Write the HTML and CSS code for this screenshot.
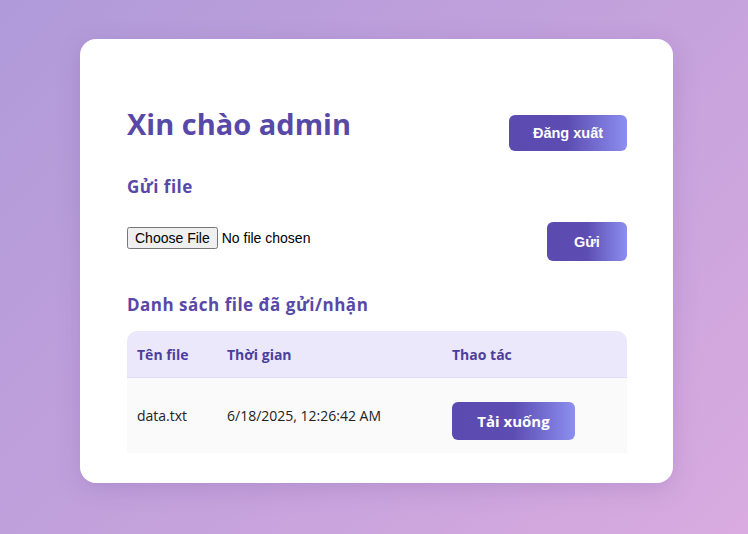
FILE: index.html
```html
<!DOCTYPE html>
<html lang="vi">
<head>
<meta charset="utf-8">
<title>Dashboard</title>
<link rel="stylesheet" href="styles.css">
</head>
<body>
<main class="card">
  <header class="top">
    <h1 class="title">Xin chào admin</h1>
    <button class="btn btn-logout">Đăng xuất</button>
  </header>
  <h3 class="section">Gửi file</h3>
  <form class="upload">
    <input class="file" type="file">
    <button type="button" class="btn btn-send">Gửi</button>
  </form>
  <h3 class="section section-list">Danh sách file đã gửi/nhận</h3>
  <table class="files">
    <thead>
      <tr><th class="c1">Tên file</th><th class="c2">Thời gian</th><th class="c3">Thao tác</th></tr>
    </thead>
    <tbody>
      <tr><td>data.txt</td><td>6/18/2025, 12:26:42 AM</td><td class="act"><a class="btn btn-dl">Tải xuống</a></td></tr>
    </tbody>
  </table>
</main>
</body>
</html>
```
FILE: styles.css
```css
html, body { margin: 0; height: 100%; }
body {
  background: linear-gradient(135deg, #b09ad9 0%, #c5a2dc 55%, #d9abe0 100%);
  font-family: "Open Sans", "Noto Sans", sans-serif;
  padding-top: 39px;
  box-sizing: border-box;
}
.card {
  width: 593px;
  box-sizing: border-box;
  margin-left: 80px;
  background: #fff;
  border-radius: 16px;
  box-shadow: 0 6px 24px rgba(90, 60, 140, 0.18);
  padding: 63px 46px 30px 47px;
}
.top {
  display: flex;
  justify-content: space-between;
  align-items: flex-start;
}
.title {
  margin: 3px 0 0;
  font-size: 29px;
  line-height: 38px;
  font-weight: 700;
  color: #5848a8;
}
.btn {
  border: none;
  color: #fff;
  border-radius: 6px;
  background: linear-gradient(90deg, #5b4ab0 0%, #5d4db2 50%, #8c8ff0 100%);
  font-weight: 700;
  cursor: pointer;
}
.btn-logout {
  margin-top: 13px;
  width: 118px;
  height: 36px;
  font-family: "Liberation Sans", Arial, sans-serif;
  font-size: 14.5px;
}
.section {
  margin: 24px 0 0;
  font-size: 17px;
  line-height: 23px;
  font-weight: 700;
  color: #5848a8;
  letter-spacing: 0.5px;
}
.upload {
  margin-top: 24px;
  display: flex;
  justify-content: space-between;
  align-items: flex-start;
}
.file {
  margin-top: 5px;
  font-family: "Liberation Sans", Arial, sans-serif;
  font-size: 14px;
}
.btn-send {
  width: 80px;
  height: 39px;
  font-family: "Liberation Sans", Arial, sans-serif;
  font-size: 14.5px;
}
.section-list { margin-top: 32px; }
.files {
  margin-top: 15px;
  width: 100%;
  border-collapse: separate;
  border-spacing: 0;
  font-size: 14px;
}
.files th {
  background: #ece8fb;
  color: #4c3f9c;
  text-align: left;
  font-weight: 700;
  height: 46px;
  padding: 0 10px;
  border-bottom: 1px solid #e1ddf6;
}
.files th.c1 { width: 70px; border-top-left-radius: 10px; }
.files th.c2 { width: 205px; }
.files th.c3 { border-top-right-radius: 10px; }
.files td {
  background: #fafafa;
  color: #222;
  height: 75px;
  padding: 0 10px;
}
.files td.act { padding-top: 10px; box-sizing: border-box; }
.btn-dl {
  display: inline-flex;
  align-items: center;
  justify-content: center;
  width: 123px;
  height: 38px;
  font-size: 15px;
}
```
